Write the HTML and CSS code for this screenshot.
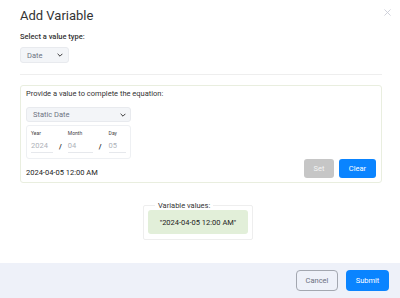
FILE: index.html
```html
<!DOCTYPE html>
<html lang="en">
	<head>
		<meta charset="utf-8">
		<title>Add Variable</title>
		<link rel="stylesheet" href="styles.css">
	</head>
	<body>
		<div class="modal">
			<div class="modal-head">
				<h2 class="modal-title">Add Variable</h2>
				<svg class="close" viewBox="0 0 8 8" width="7" height="7"><path d="M0.5 0.5l7 7M7.5 0.5l-7 7" stroke="#c9ccd6" stroke-width="1"/></svg>
			</div>
			<div class="modal-body">
				<div class="field-label">Select a value type:</div>
				<div class="select type-select">
					<span>Date</span>
					<svg class="chevron" viewBox="0 0 10 6" width="6" height="4"><path d="M1 1l4 4 4-4" fill="none" stroke="#333" stroke-width="1.6"/></svg>
				</div>
				<hr class="divider">
				<div class="panel">
					<div class="panel-main">
						<div class="panel-text">Provide a value to complete the equation:</div>
						<div class="select date-mode">
							<span>Static Date</span>
							<svg class="chevron" viewBox="0 0 10 6" width="6" height="4"><path d="M1 1l4 4 4-4" fill="none" stroke="#333" stroke-width="1.6"/></svg>
						</div>
						<div class="date-box">
							<div class="date-part year">
								<div class="part-label">Year</div>
								<div class="part-input">2024</div>
							</div>
							<span class="slash">/</span>
							<div class="date-part month">
								<div class="part-label">Month</div>
								<div class="part-input">04</div>
							</div>
							<span class="slash">/</span>
							<div class="date-part day">
								<div class="part-label">Day</div>
								<div class="part-input">05</div>
							</div>
						</div>
						<div class="date-result">2024-04-05 12:00 AM</div>
					</div>
					<div class="panel-actions">
						<button class="btn btn-disabled">Set</button>
						<button class="btn btn-primary">Clear</button>
					</div>
				</div>
				<fieldset class="values">
					<legend>Variable values:</legend>
					<div class="value-chip">"2024-04-05 12:00 AM"</div>
				</fieldset>
			</div>
			<div class="modal-foot">
				<button class="btn btn-outline">Cancel</button>
				<button class="btn btn-primary btn-lg">Submit</button>
			</div>
		</div>
	</body>
</html>
```

FILE: styles.css
```css
body {
	margin: 0;
	padding: 0;
	width: 400px;
	height: 298px;
	overflow: hidden;
	background-color: #ffffff;
	font-family: Roboto, "Liberation Sans", sans-serif;
	color: #222;
}

.modal {
	display: flex;
	flex-flow: column;
	height: 298px;
}

.modal-head {
	display: flex;
	justify-content: space-between;
	align-items: flex-start;
	padding: 6px 9px 0 20px;
}

.modal-title {
	margin: 0;
	font-size: 13px;
	line-height: 20px;
	font-weight: 400;
	color: #333;
}

.close {
	margin-top: 3px;
}

.modal-body {
	flex: 1;
	padding: 0 18px 0 20px;
}

.field-label {
	margin-top: 6px;
	font-size: 7.5px;
	font-weight: 500;
	line-height: 10px;
	color: #333;
}

.select {
	display: flex;
	align-items: center;
	justify-content: space-between;
	box-sizing: border-box;
	background-color: #f3f5f8;
	border: 1px solid #e8eaee;
	border-radius: 3px;
	color: #6d7483;
}

.type-select {
	margin-top: 5px;
	width: 49px;
	height: 16px;
	padding: 0 5px 0 6px;
	font-size: 7.5px;
}

.divider {
	margin: 11px 0 0;
	border: none;
	border-top: 1px solid #eeeeee;
}

.panel {
	margin-top: 10px;
	display: flex;
	justify-content: space-between;
	align-items: flex-end;
	border: 1px solid #e9eedf;
	border-radius: 3px;
	padding: 5px 5px 4px 5px;
	height: 98px;
	box-sizing: border-box;
}

.panel-text {
	font-size: 7.5px;
	line-height: 10px;
	color: #333;
}

.date-mode {
	margin-top: 8px;
	width: 105px;
	height: 15px;
	padding: 0 4px 0 6px;
	font-size: 7.5px;
}

.date-box {
	margin-top: 3px;
	width: 105px;
	height: 34px;
	box-sizing: border-box;
	border: 1px solid #eef0f3;
	border-radius: 3px;
	padding: 4px 4px 0 4px;
	display: flex;
}

.date-part.year {
	width: 22px;
}

.date-part.month {
	width: 25px;
}

.date-part.day {
	width: 17px;
}

.part-label {
	font-size: 5px;
	line-height: 7px;
	color: #444;
}

.part-input {
	margin-top: 4px;
	font-size: 7.5px;
	line-height: 10px;
	color: #aeb2b9;
	border-bottom: 1px solid #e6e8ec;
	padding-bottom: 1px;
}

.slash {
	margin: 12px 6px 0 6px;
	font-size: 7.5px;
	font-weight: 700;
	color: #333;
}

.slash + .date-part.day {
	margin-left: 1px;
}

.date-result {
	margin-top: 9px;
	font-size: 7.5px;
	line-height: 10px;
	color: #222;
}

.panel-actions {
	display: flex;
	gap: 5px;
}

.btn {
	font-family: Roboto, "Liberation Sans", sans-serif;
	font-size: 7.5px;
	border: none;
	border-radius: 3px;
	padding: 0;
	height: 19px;
}

.btn-disabled {
	width: 30px;
	background-color: #c6c6c6;
	color: #f4f4f4;
}

.btn-primary {
	width: 37px;
	background-color: #0a84ff;
	color: #ffffff;
}

.values {
	margin: 18px auto 0;
	width: 110px;
	box-sizing: border-box;
	border: 1px solid #eeeeee;
	border-radius: 2px;
	padding: 0 4px 5px;
	position: relative;
	left: -3px;
}

.values legend {
	font-size: 7.5px;
	padding: 0 3px;
	margin-left: 7px;
	color: #333;
}

.value-chip {
	background-color: #e2efd9;
	border-radius: 3px;
	height: 24px;
	display: flex;
	align-items: center;
	justify-content: center;
	font-size: 7.5px;
	color: #222;
}

.modal-foot {
	height: 35px;
	background-color: #eef1f9;
	display: flex;
	justify-content: flex-end;
	align-items: center;
	gap: 8px;
	padding: 0 11px 0 0;
}

.btn-outline {
	width: 42px;
	height: 21px;
	background-color: transparent;
	border: 1px solid #a3a7b0;
	border-radius: 4px;
	color: #6b7080;
}

.btn-lg {
	width: 43px;
	height: 21px;
	border-radius: 4px;
}
```
